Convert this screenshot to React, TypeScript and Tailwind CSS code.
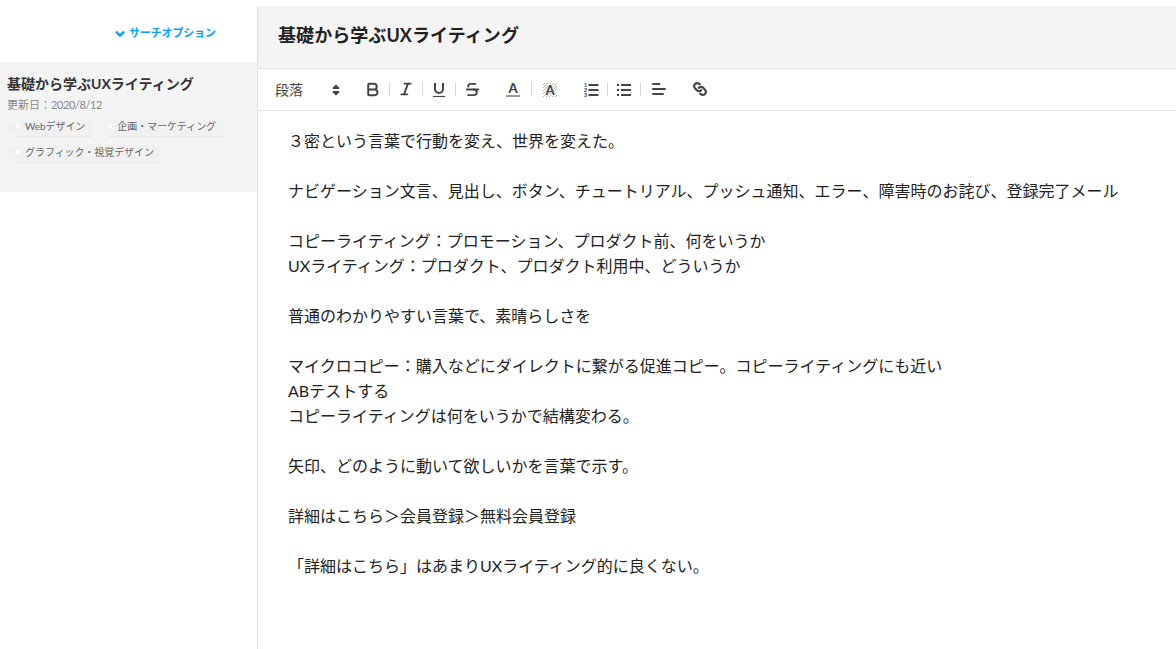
import type { ReactNode } from 'react'
import { Bold, Italic, Strikethrough } from 'lucide-react'
import { FaLink } from 'react-icons/fa'

const tags = ['Webデザイン', '企画・マーケティング', 'グラフィック・視覚デザイン']

const lines = [
  '３密という言葉で行動を変え、世界を変えた。',
  '',
  'ナビゲーション文言、見出し、ボタン、チュートリアル、プッシュ通知、エラー、障害時のお詫び、登録完了メール',
  '',
  'コピーライティング：プロモーション、プロダクト前、何をいうか',
  'UXライティング：プロダクト、プロダクト利用中、どういうか',
  '',
  '普通のわかりやすい言葉で、素晴らしさを',
  '',
  'マイクロコピー：購入などにダイレクトに繋がる促進コピー。コピーライティングにも近い',
  'ABテストする',
  'コピーライティングは何をいうかで結構変わる。',
  '',
  '矢印、どのように動いて欲しいかを言葉で示す。',
  '',
  '詳細はこちら＞会員登録＞無料会員登録',
  '',
  '「詳細はこちら」はあまりUXライティング的に良くない。',
]

const Tag = ({ label }: { label: string }) => (
  <div className="flex h-[18px]">
    <svg width="8" height="18" viewBox="0 0 8 18" className="shrink-0">
      <path d="M8 0v17L0 8z" fill="#f1f1f1" />
    </svg>
    <div className="flex items-start border-b border-[#e8e8e8] bg-[#f1f1f1] pr-[7px] pl-px">
      <span className="mt-[5px] mr-[5px] size-1 rounded-full bg-white" />
      <span className="text-[10px] leading-[14px] tracking-[-0.05px] whitespace-nowrap text-[#666]">{label}</span>
    </div>
  </div>
)

const ToolButton = ({ label, className = 'w-8', children }: { label: string; className?: string; children: ReactNode }) => (
  <button aria-label={label} className={`mb-px flex h-4 shrink-0 items-center justify-center ${className}`}>
    {children}
  </button>
)

const Divider = () => <span className="mb-px h-[14px] w-px shrink-0 bg-[#d8d8d8]" />

const ChevronIcon = () => (
  <svg width="10" height="8" viewBox="0 0 10 8" fill="none" stroke="#0a9ff5" strokeWidth="2.400">
    <path d="M.9 1.700 5 5.600l4.100-3.900" />
  </svg>
)

const SortIcon = () => (
  <svg width="8" height="12" viewBox="0 0 8 12" fill="#444">
    <path d="M4 .4 7.200 3.600v1.300H.8V3.600zM4 11.600 7.200 8.400V7.100H.8v1.300z" />
  </svg>
)

const UnderlineIcon = () => (
  <svg width="12" height="16" viewBox="0 0 12 16" fill="none" stroke="#444">
    <path d="M2 2v6a4 4 0 0 0 8 0V2" strokeWidth="2" />
    <path d="M0 15.500h12" strokeWidth="1.200" />
  </svg>
)

const TextColorIcon = () => (
  <svg width="14" height="22" viewBox="0 -3 14 22" className="shrink-0">
    <text x="7" y="12" textAnchor="middle" fontFamily="Lato" fontWeight="900" fontSize="13" fill="#444">A</text>
    <path d="M0 15h14" stroke="#999" strokeWidth="2" />
  </svg>
)

const BackColorIcon = () => (
  <svg width="14" height="22" viewBox="0 -3 14 22" className="shrink-0">
    <path
      d="M0 4l2-2M0 7l5-5M0 10l8-8M0 13l11-11M0 16l14-14M3 16l11-11M6 16l8-8M9 16l5-5M12 16l2-2"
      stroke="#999"
      strokeWidth=".8"
    />
    <text x="7" y="14" textAnchor="middle" fontFamily="Lato" fontWeight="900" fontSize="13" fill="#444" stroke="#fff" strokeWidth="1.500" paintOrder="stroke">A</text>
  </svg>
)

const OrderedListIcon = () => (
  <svg width="15" height="16" viewBox="0 0 15 16" className="overflow-visible">
    <g fontFamily="Liberation Sans" fontWeight="700" fontSize="5.500" fill="#444">
      <text x="0" y="6">1</text>
      <text x="0" y="11">2</text>
      <text x="0" y="16">3</text>
    </g>
    <path d="M4.500 4H14.500M4.500 9H14.500M4.500 14H14.500" stroke="#444" strokeWidth="2" />
  </svg>
)

const BulletListIcon = () => (
  <svg width="14" height="16" viewBox="0 0 14 16" stroke="#444" strokeWidth="2">
    <path d="M0 4h2M0 9h2M0 14h2M4 4h10M4 9h10M4 14h10" />
  </svg>
)

const AlignIcon = () => (
  <svg width="14" height="16" viewBox="0 0 14 16" stroke="#444" strokeWidth="2" strokeLinecap="round">
    <path d="M1 3h6.500M1 8h12M1 13h10" />
  </svg>
)

const Toolbar = () => (
  <div className="flex h-[42px] items-center border-b border-[#e3e3e3] pl-[17px] text-[#444]">
    <span className="w-[57px] text-sm leading-5">段落</span>
    <SortIcon />
    <ToolButton label="太字" className="ml-4 w-8"><Bold size={17} strokeWidth={2.8} /></ToolButton>
    <span className="w-px" />
    <Divider />
    <ToolButton label="斜体"><Italic size={16} strokeWidth={2.8} /></ToolButton>
    <Divider />
    <ToolButton label="下線"><UnderlineIcon /></ToolButton>
    <Divider />
    <ToolButton label="取り消し線"><Strikethrough size={17} strokeWidth={2.7} /></ToolButton>
    <ToolButton label="文字色" className="ml-[9px] w-8"><TextColorIcon /></ToolButton>
    <span className="w-[2px]" />
    <Divider />
    <ToolButton label="背景色" className="w-9"><BackColorIcon /></ToolButton>
    <ToolButton label="番号付きリスト" className="ml-[7px] w-8"><OrderedListIcon /></ToolButton>
    <Divider />
    <ToolButton label="箇条書き"><BulletListIcon /></ToolButton>
    <Divider />
    <ToolButton label="配置" className="w-9"><AlignIcon /></ToolButton>
    <ToolButton label="リンク" className="ml-[7px] w-8"><FaLink size={14} className="rotate-90" /></ToolButton>
  </div>
)

const Sidebar = () => (
  <aside className="w-[257px] shrink-0">
    <div className="flex h-14 items-center pb-px pl-[115px] text-[#0a9ff5]">
      <ChevronIcon />
      <span className="mb-px ml-1 text-[11px] leading-4 font-bold tracking-[-0.15px]">サーチオプション</span>
    </div>
    <div className="h-[130px] bg-[#f4f4f4] pt-3 pl-[7px]">
      <h2 className="text-sm leading-5 font-bold text-[#333]">基礎から学ぶUXライティング</h2>
      <p className="mt-[3px] text-[11px] leading-4 text-[#888]">
        更新日：<span className="tracking-[-0.4px]">2020/8/12</span>
      </p>
      <div className="mt-[6px] flex flex-wrap gap-x-[7px] gap-y-2">
        {tags.map((tag) => (
          <Tag key={tag} label={tag} />
        ))}
      </div>
    </div>
  </aside>
)

export default function App() {
  return (
    <div className="flex h-[649px] w-[1176px] overflow-hidden bg-white pt-[6px] font-['Lato','Noto_Sans_CJK_JP',sans-serif]">
      <Sidebar />
      <main className="min-w-0 flex-1 border-l border-[#e3e3e3]">
        <header className="flex h-[63px] items-center border-b border-[#e3e3e6] bg-[#f4f4f4] pb-1 pl-5">
          <h1 className="text-lg leading-7 font-bold tracking-[0.07px] text-[#222]">基礎から学ぶUXライティング</h1>
        </header>
        <Toolbar />
        <div className="pt-[17px] pl-[30px] text-base leading-[25px] text-[#222]">
          {lines.map((line, i) => (
            <p key={i} className="h-[25px] whitespace-nowrap">{line}</p>
          ))}
        </div>
      </main>
    </div>
  )
}
